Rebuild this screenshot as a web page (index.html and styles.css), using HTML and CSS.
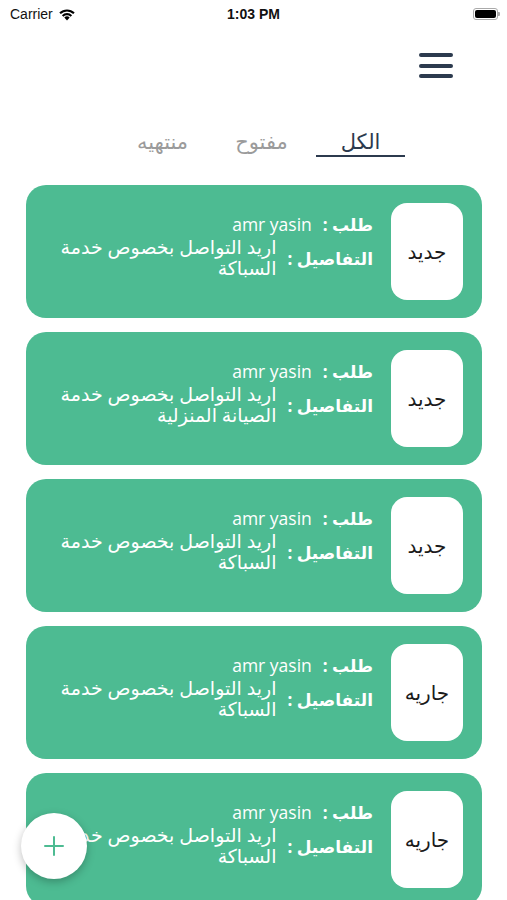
FILE: index.html
```html
<!DOCTYPE html>
<html lang="ar">
<head>
    <meta charset="UTF-8">
    <meta name="viewport" content="width=device-width, initial-scale=1.0">
    <title>الطلبات</title>
    <link rel="stylesheet" href="styles.css">
</head>
<body>
    <div class="status-bar">
        <div class="status-left">
            <span>Carrier</span>
            <svg class="wifi" width="18" height="13" viewBox="0 0 18 13">
                <path d="M9 12.5 L6.3 9.6 A3.9 3.9 0 0 1 11.7 9.6 Z" fill="#000"/>
                <path d="M3.9 7.2 A7.3 7.3 0 0 1 14.1 7.2 L12.6 8.7 A5.2 5.2 0 0 0 5.4 8.7 Z" fill="#000"/>
                <path d="M1.3 4.6 A11 11 0 0 1 16.7 4.6 L15.2 6.1 A8.9 8.9 0 0 0 2.8 6.1 Z" fill="#000"/>
            </svg>
        </div>
        <div class="status-time">1:03 PM</div>
        <div class="battery">
            <div class="battery-fill"></div>
        </div>
    </div>

    <div class="top-bar">
        <button class="menu-btn" aria-label="menu">
            <span></span><span></span><span></span>
        </button>
    </div>

    <div class="tabs" dir="rtl">
        <div class="tab active">الكل</div>
        <div class="tab">مفتوح</div>
        <div class="tab">منتهيه</div>
    </div>

    <div class="orders" dir="rtl">
        <div class="order-card">
            <div class="status-box">جديد</div>
            <div class="order-info">
                <div class="info-row">
                    <span class="label">طلب :</span>
                    <span class="value name">amr yasin</span>
                </div>
                <div class="info-row details">
                    <span class="label">التفاصيل :</span>
                    <span class="value">اريد التواصل بخصوص خدمة السباكة</span>
                </div>
            </div>
        </div>
        <div class="order-card">
            <div class="status-box">جديد</div>
            <div class="order-info">
                <div class="info-row">
                    <span class="label">طلب :</span>
                    <span class="value name">amr yasin</span>
                </div>
                <div class="info-row details">
                    <span class="label">التفاصيل :</span>
                    <span class="value">اريد التواصل بخصوص خدمة الصيانة المنزلية</span>
                </div>
            </div>
        </div>
        <div class="order-card">
            <div class="status-box">جديد</div>
            <div class="order-info">
                <div class="info-row">
                    <span class="label">طلب :</span>
                    <span class="value name">amr yasin</span>
                </div>
                <div class="info-row details">
                    <span class="label">التفاصيل :</span>
                    <span class="value">اريد التواصل بخصوص خدمة السباكة</span>
                </div>
            </div>
        </div>
        <div class="order-card">
            <div class="status-box">جاريه</div>
            <div class="order-info">
                <div class="info-row">
                    <span class="label">طلب :</span>
                    <span class="value name">amr yasin</span>
                </div>
                <div class="info-row details">
                    <span class="label">التفاصيل :</span>
                    <span class="value">اريد التواصل بخصوص خدمة السباكة</span>
                </div>
            </div>
        </div>
        <div class="order-card">
            <div class="status-box">جاريه</div>
            <div class="order-info">
                <div class="info-row">
                    <span class="label">طلب :</span>
                    <span class="value name">amr yasin</span>
                </div>
                <div class="info-row details">
                    <span class="label">التفاصيل :</span>
                    <span class="value">اريد التواصل بخصوص خدمة السباكة</span>
                </div>
            </div>
        </div>
    </div>

    <button class="fab" aria-label="add">
        <svg width="22" height="22" viewBox="0 0 22 22">
            <path d="M11 2 V20 M2 11 H20" stroke="#4dbb92" stroke-width="2" stroke-linecap="round"/>
        </svg>
    </button>
</body>
</html>
```

FILE: styles.css
```css
:root {
    --green: #4dbb92;
    --navy: #2c3a4e;
    --grey: #9b9b9b;
    --white: #FFFFFF;
}

* {
    margin: 0;
    padding: 0;
    box-sizing: border-box;
}

body {
    font-family: 'Open Sans', 'DejaVu Sans', sans-serif;
    background: var(--white);
    color: #111;
    width: 507px;
    overflow: hidden;
}

/* status bar */
.status-bar {
    height: 28px;
    display: flex;
    align-items: center;
    justify-content: space-between;
    padding: 0 9px 0 10px;
    font-family: 'Liberation Sans', sans-serif;
    font-size: 14px;
    position: relative;
}

.status-left {
    display: flex;
    align-items: center;
    gap: 5px;
}

.status-time {
    position: absolute;
    left: 0;
    right: 0;
    text-align: center;
    font-weight: 700;
}

.battery {
    width: 25px;
    height: 12px;
    border: 1px solid #aaa;
    border-radius: 3px;
    padding: 1px;
    position: relative;
}

.battery::after {
    content: '';
    position: absolute;
    right: -3px;
    top: 3px;
    width: 2px;
    height: 4px;
    background: #aaa;
    border-radius: 0 1px 1px 0;
}

.battery-fill {
    width: 100%;
    height: 100%;
    background: #000;
    border-radius: 2px;
}

/* header */
.top-bar {
    display: flex;
    justify-content: flex-end;
    padding: 25px 54px 0 0;
}

.menu-btn {
    border: none;
    background: none;
    width: 34px;
    display: flex;
    flex-direction: column;
    gap: 6.5px;
}

.menu-btn span {
    display: block;
    height: 4px;
    border-radius: 2px;
    background: var(--navy);
}

/* tabs */
.tabs {
    display: flex;
    gap: 10px;
    padding: 49px 102px 0 0;
    margin-bottom: 28px;
}

.tab {
    width: 89px;
    text-align: center;
    font-size: 21px;
    line-height: 28px;
    color: var(--grey);
    border-bottom: 2px solid transparent;
}

.tab.active {
    color: var(--navy);
    border-bottom-color: var(--navy);
}

/* order cards */
.orders {
    display: flex;
    flex-direction: column;
    gap: 14px;
    padding: 0 25px 0 26px;
}

.order-card {
    background: var(--green);
    border-radius: 20px;
    height: 133px;
    display: flex;
    align-items: flex-start;
    gap: 18px;
    padding: 18px 19px 0 24px;
}

.status-box {
    width: 72px;
    height: 97px;
    flex-shrink: 0;
    background: var(--white);
    border-radius: 16px;
    display: flex;
    align-items: center;
    justify-content: center;
    font-size: 20px;
    color: #1a1a1a;
}

.order-info {
    display: flex;
    flex-direction: column;
    gap: 1px;
    padding-top: 10px;
    color: var(--white);
}

.info-row {
    display: flex;
    align-items: center;
    gap: 11px;
}

.label {
    font-weight: 700;
    font-size: 17px;
    white-space: nowrap;
}

.value {
    font-size: 19px;
    line-height: 21px;
}

.value.name {
    font-size: 17.5px;
}

.details .value {
    max-width: 232px;
}

.fab {
    position: fixed;
    left: 21px;
    top: 813px;
    width: 66px;
    height: 66px;
    border-radius: 50%;
    border: none;
    background: var(--white);
    box-shadow: 0 3px 8px rgba(0, 0, 0, 0.25);
    display: flex;
    align-items: center;
    justify-content: center;
}
```
